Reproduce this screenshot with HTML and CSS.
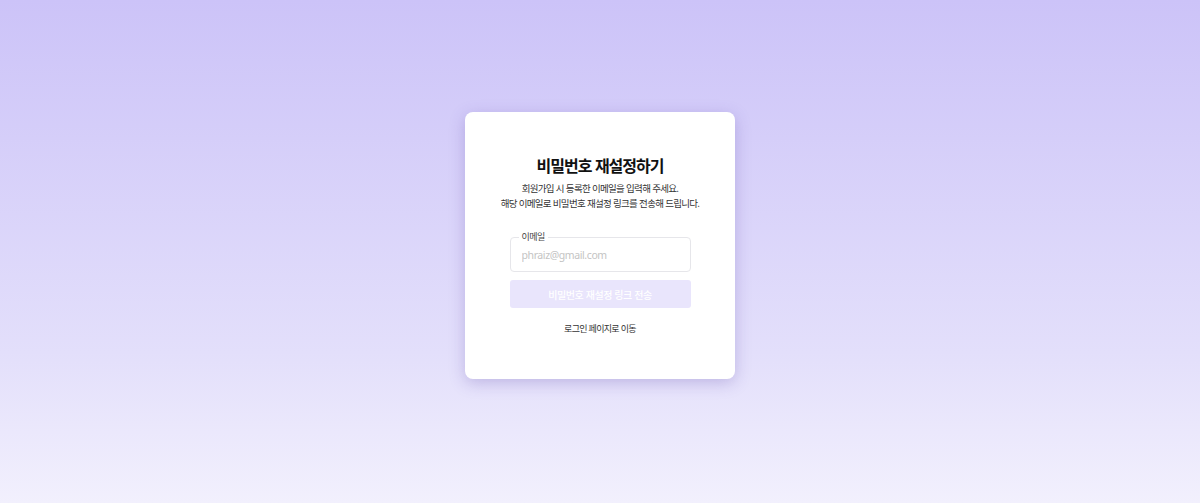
FILE: index.html
```html
<!DOCTYPE html>
<html lang="ko">
<head>
<meta charset="utf-8">
<link rel="stylesheet" href="styles.css">
</head>
<body>
<main class="page">
  <section class="card">
    <h1 class="title">비밀번호 재설정하기</h1>
    <p class="desc">회원가입 시 등록한 이메일을 입력해 주세요.<br>해당 이메일로 비밀번호 재설정 링크를 전송해 드립니다.</p>
    <form class="form">
      <div class="field">
        <label class="legend">이메일</label>
        <input class="input" type="email" placeholder="phraiz@gmail.com">
      </div>
      <button class="btn" type="button">비밀번호 재설정 링크 전송</button>
    </form>
    <a class="link" href="#">로그인 페이지로 이동</a>
  </section>
</main>
</body>
</html>
```
FILE: styles.css
```css
* { box-sizing: border-box; }
html, body { margin: 0; height: 100%; }
body {
  font-family: "Noto Sans CJK KR", "Noto Sans", sans-serif;
  background: linear-gradient(180deg, #ccc3f8 0%, #e3dffb 70%, #f2f0fd 100%);
}
.page {
  height: 503px;
  display: flex;
  justify-content: center;
  padding-top: 112px;
}
.card {
  width: 270px;
  height: 267px;
  background: #fff;
  border-radius: 8px;
  box-shadow: 0 4px 16px rgba(90, 70, 170, 0.28);
  display: flex;
  flex-direction: column;
  align-items: center;
  padding-top: 41px;
}
.title {
  margin: 0;
  font-size: 16px;
  font-weight: 700;
  color: #111;
  line-height: 24px;
  letter-spacing: -1px;
}
.desc {
  margin: 4px 0 0;
  font-size: 9.5px;
  line-height: 15px;
  text-align: center;
  color: #333;
  letter-spacing: -0.7px;
  white-space: nowrap;
}
.form {
  width: 181px;
  margin-top: 26px;
  display: flex;
  flex-direction: column;
  gap: 8px;
}
.field {
  padding: 0 11px;
  height: 35px;
  border: 1px solid #e6e6ea;
  border-radius: 4px;
  display: flex;
  align-items: center;
  position: relative;
}
.legend {
  position: absolute;
  top: -7px;
  left: 8px;
  padding: 0 3px;
  background: #fff;
  font-size: 9px;
  line-height: 12px;
  color: #444;
  letter-spacing: -0.5px;
}
.input {
  border: 0;
  outline: 0;
  width: 100%;
  padding: 0;
  font-family: "Noto Sans", "Noto Sans CJK KR", sans-serif;
  font-size: 10.5px;
  color: #333;
  background: transparent;
  letter-spacing: -0.4px;
}
.input::placeholder { color: #c4c4c4; }
.btn {
  height: 28px;
  border: 0;
  border-radius: 3px;
  background: #e9e5fc;
  color: #fff;
  font-family: inherit;
  font-size: 10px;
  font-weight: 500;
  letter-spacing: -0.45px;
}
.link {
  margin-top: 14px;
  font-size: 9px;
  line-height: 13px;
  color: #333;
  text-decoration: none;
  letter-spacing: -0.7px;
}
```
